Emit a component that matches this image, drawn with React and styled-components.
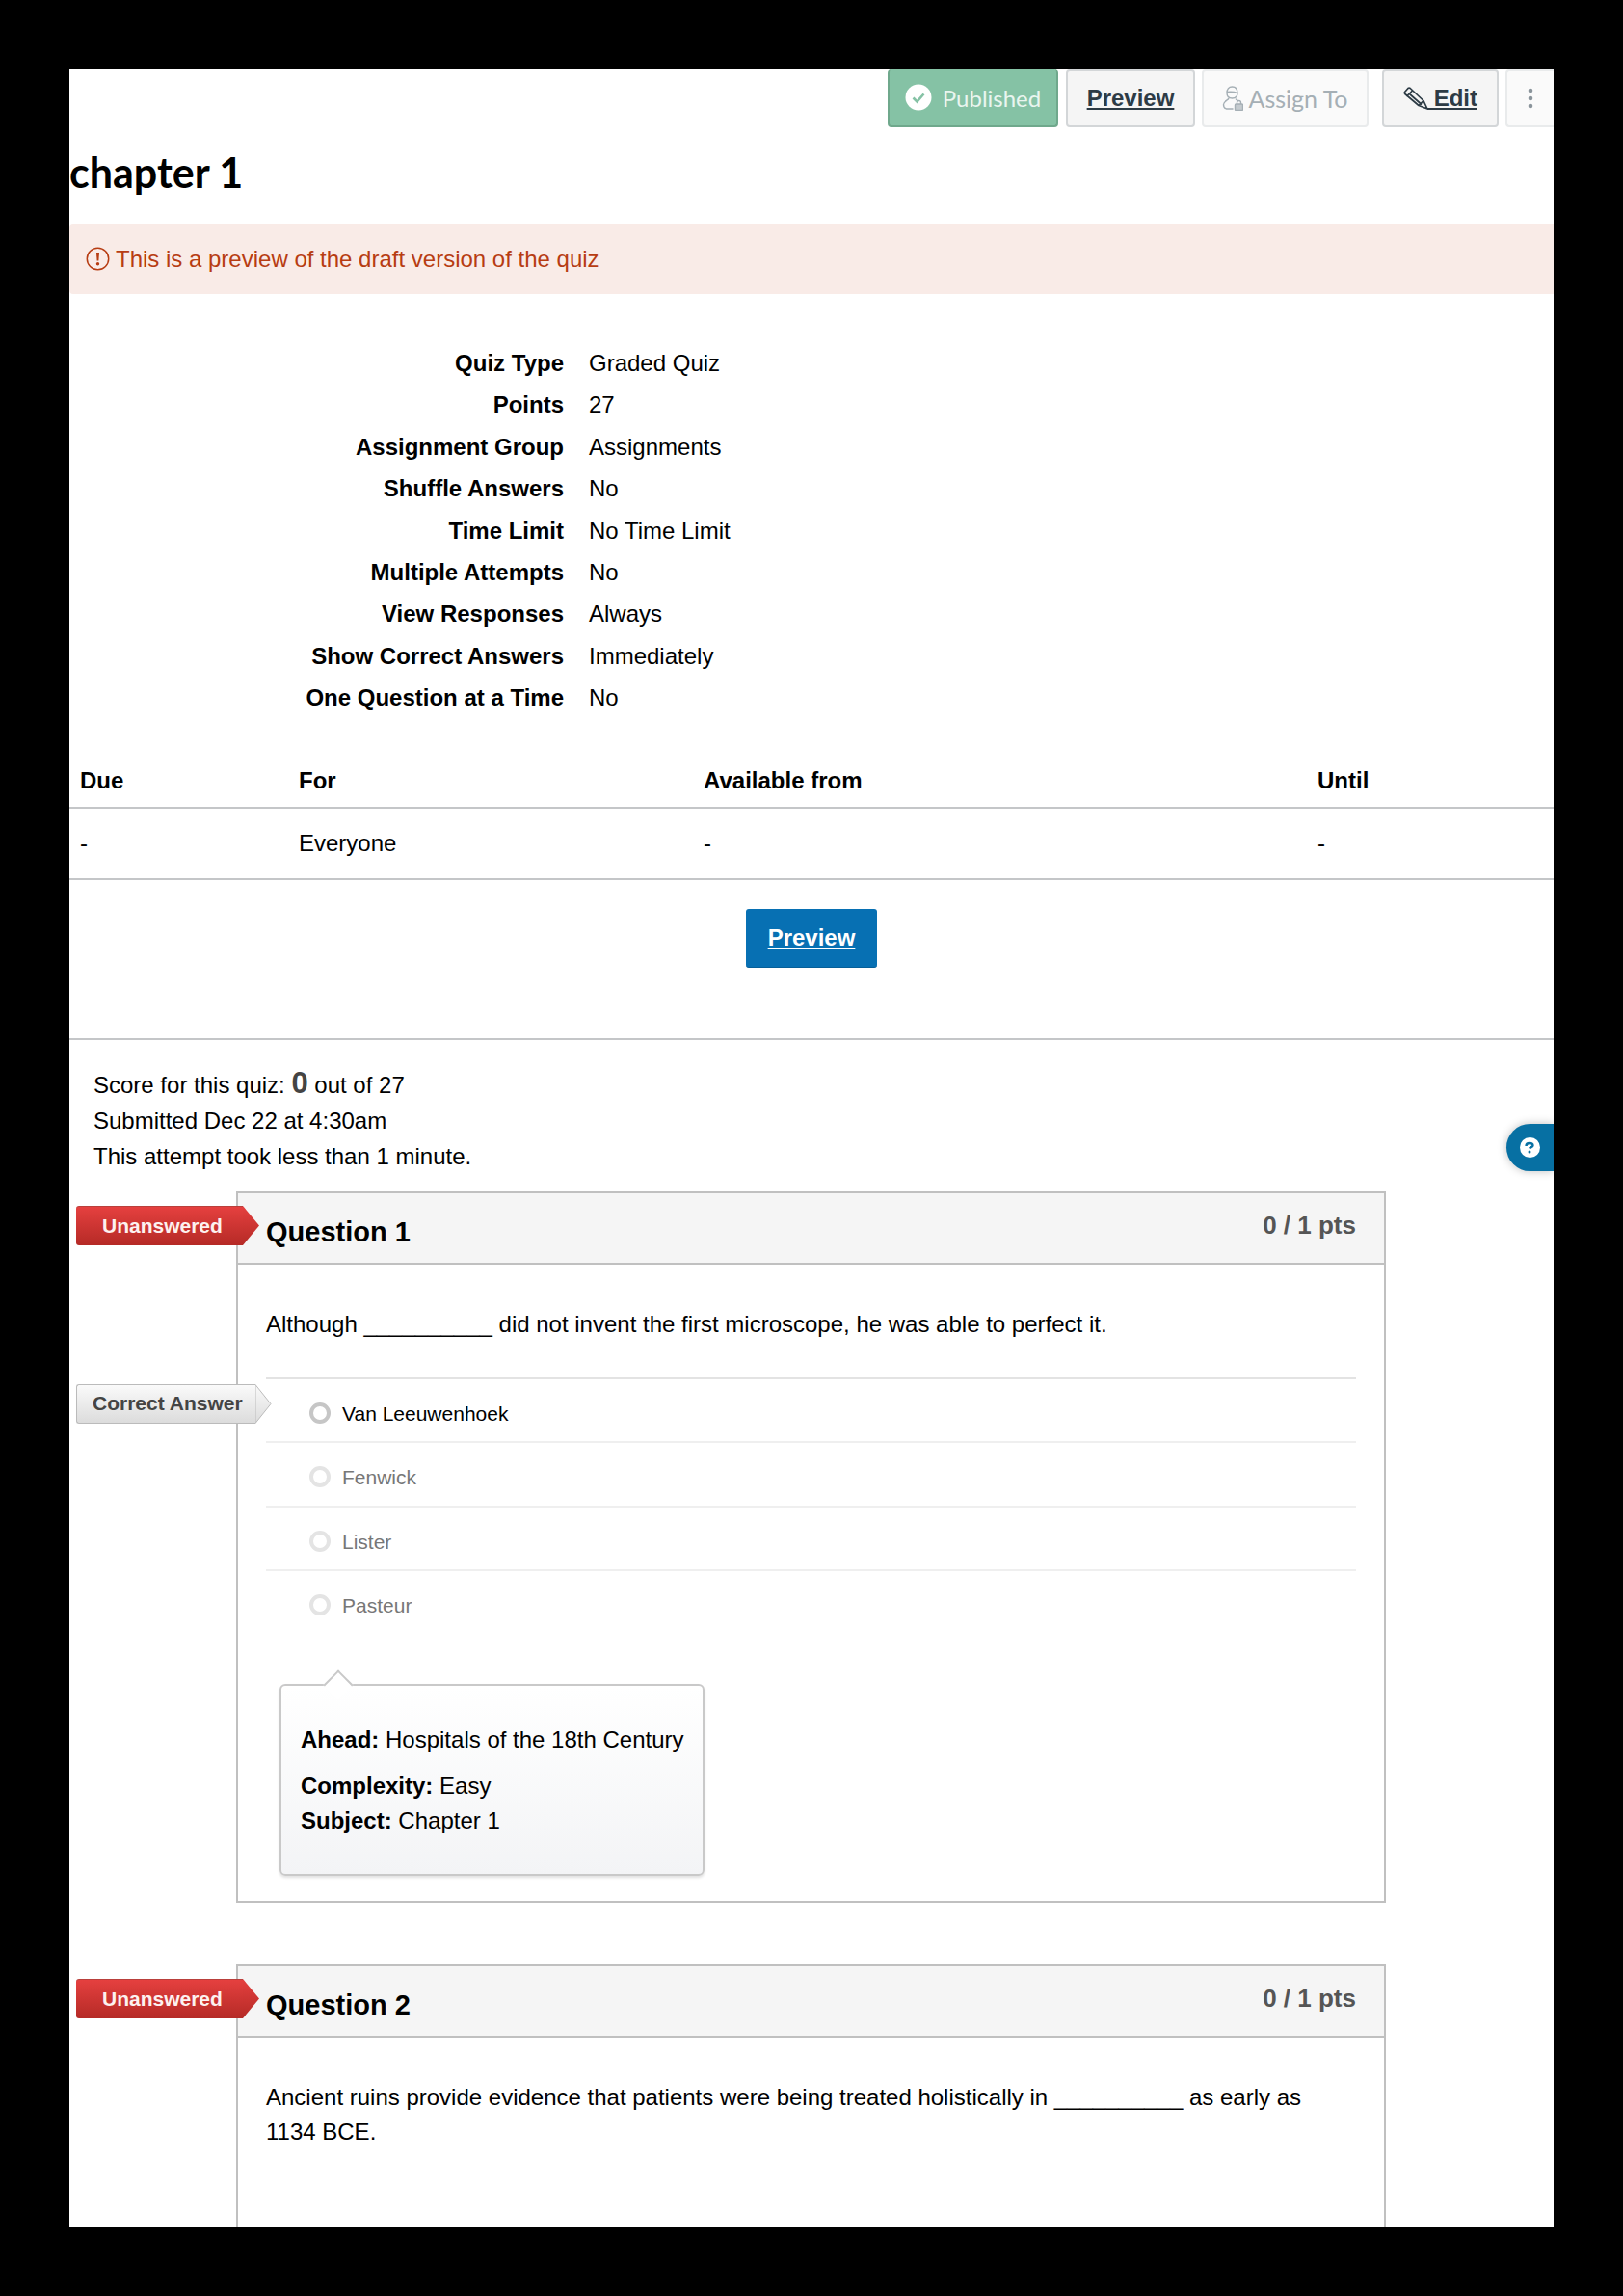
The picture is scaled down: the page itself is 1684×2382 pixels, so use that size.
import React from "react";
import styled, { createGlobalStyle } from "styled-components";

const GlobalStyle = createGlobalStyle`
  html, body {
    margin: 0;
    padding: 0;
    background: #000;
    overflow: hidden;
  }
  body {
    font-family: "Liberation Sans", Arial, sans-serif;
    font-size: 24px;
    color: #000;
  }
`;

const Sheet = styled.div`
  width: 1540px;
  height: 2238px;
  margin: 72px 0 0 72px;
  background: #fff;
  overflow: hidden;
  position: relative;
`;

/////////////////// header ///////////////////
const Toolbar = styled.div`
  display: flex;
  justify-content: flex-end;
  height: 60px;
`;

const ToolButton = styled.div`
  box-sizing: border-box;
  height: 60px;
  width: ${(p) => p.w}px;
  margin-left: ${(p) => p.gap || 7}px;
  display: flex;
  align-items: center;
  justify-content: center;
  background: #f5f5f5;
  border: 2px solid #d3d6d8;
  border-radius: 4px;
  color: #2d3b45;
  font-weight: bold;
  text-decoration: underline;
`;

const PublishedButton = styled(ToolButton)`
  background: #85c2a5;
  border-color: #6fa88c;
  color: #e9f5ef;
  font-family: Lato, sans-serif;
  font-weight: normal;
  text-decoration: none;
  gap: 11px;
  border-top: 0;
`;

const AssignButton = styled(ToolButton)`
  background: #fafafa;
  border-color: #e9ebec;
  color: #a5afb5;
  font-family: Lato, sans-serif;
  font-size: 25px;
  font-weight: normal;
  text-decoration: none;
  gap: 5px;
`;

const EditLabel = styled.span`
  white-space: pre;
  margin-left: -1px;
`;

const MoreButton = styled(ToolButton)`
  border-right: 0;
  border-radius: 4px 0 0 4px;
  background: #fafafa;
  border-color: #e9ebec;
`;

const Title = styled.h1`
  margin: 0;
  height: 100px;
  font-family: Lato, sans-serif;
  font-size: 43px;
  font-weight: bold;
  line-height: 94px;
`;

const Alert = styled.div`
  box-sizing: border-box;
  height: 73px;
  display: flex;
  align-items: center;
  gap: 6px;
  padding-left: 17px;
  background: #f9ebe7;
  border-radius: 4px 0 0 4px;
  color: #b73c12;
`;

/////////////////// quiz facts ///////////////////
const Facts = styled.div`
  padding-top: 50px;
`;

const FactRow = styled.div`
  display: grid;
  grid-template-columns: 513px 1fr;
  column-gap: 26px;
  height: 43.4px;
  line-height: 43.4px;
`;

const FactLabel = styled.div`
  font-weight: bold;
  text-align: right;
`;

const DueGrid = styled.div`
  display: grid;
  grid-template-columns: 227px 420px 637px 1fr;
  margin-top: ${(p) => p.top || 0}px;
  padding-left: 11px;
  height: ${(p) => p.h}px;
  align-items: center;
  border-bottom: 2px solid #c4c6c8;
  font-weight: ${(p) => (p.head ? "bold" : "normal")};
  box-sizing: border-box;
`;

const PreviewWrap = styled.div`
  display: flex;
  justify-content: center;
  height: 166px;
  box-sizing: border-box;
  padding-top: 30px;
  border-bottom: 2px solid #c4c6c8;
`;

const PreviewButton = styled.div`
  width: 136px;
  height: 61px;
  display: flex;
  align-items: center;
  justify-content: center;
  background: #0770b3;
  border-bottom: 1px solid #065f98;
  box-sizing: border-box;
  border-radius: 3px;
  color: #fff;
  font-weight: bold;
  text-decoration: underline;
`;

const Score = styled.div`
  padding: 26px 0 0 25px;
  line-height: 37px;
  height: 157px;
  box-sizing: border-box;
`;

const ScoreValue = styled.span`
  font-size: 31px;
  font-weight: bold;
  color: #444;
`;

/////////////////// questions ///////////////////
const Question = styled.section`
  position: relative;
  box-sizing: border-box;
  width: 1193px;
  margin-left: 173px;
  border: 2px solid #c0c0c0;
  margin-bottom: 64px;
`;

const QuestionHead = styled.div`
  height: 74px;
  box-sizing: border-box;
  background: #f5f5f5;
  border-bottom: 2px solid #c0c0c0;
  display: flex;
  justify-content: space-between;
  padding: 0 29px;
`;

const QuestionName = styled.div`
  font-size: 29px;
  font-weight: bold;
  line-height: 80px;
`;

const Points = styled.div`
  font-weight: bold;
  font-size: 26px;
  color: #555;
  line-height: 66px;
`;

const QuestionBody = styled.div`
  padding: 44px 29px 26px;
  line-height: 36px;
  min-height: ${(p) => p.minH || 0}px;
`;

const Answers = styled.div`
  margin-top: 37px;
`;

const Answer = styled.div`
  box-sizing: border-box;
  height: 66.5px;
  display: flex;
  align-items: center;
  gap: 12px;
  padding: 8px 0 0 45px;
  border-top: 2px solid ${(p) => (p.first ? "#e3e3e3" : "#efefef")};
  font-size: 21px;
  color: ${(p) => (p.dim ? "#777" : "#000")};
`;

const Radio = styled.span`
  width: 22px;
  height: 22px;
  box-sizing: border-box;
  border-radius: 50%;
  border: 4px solid ${(p) => (p.dim ? "#e4e4e4" : "#c6c6c6")};
  margin-top: -2px;
`;

const Tag = styled.div`
  position: absolute;
  left: -168px;
  top: ${(p) => p.top}px;
  height: 41px;
  display: flex;
  align-items: center;
  font-size: 21px;
  font-weight: bold;
`;

const TagBody = styled.div`
  height: 41px;
  box-sizing: border-box;
  display: flex;
  align-items: center;
  border-radius: 3px 0 0 3px;
  ${(p) =>
    p.red
      ? `
    width: 173px;
    padding-left: 27px;
    color: #fdf1f0;
    background: linear-gradient(#e5403f, #b52a26);
    border-top: 1px solid #b9403c;
  `
      : `
    width: 186px;
    padding-left: 16px;
    color: #444;
    background: linear-gradient(#fafafa, #dcdcdc);
    border: 1px solid #bbb;
    border-right: 0;
  `}
`;

const Popover = styled.div`
  position: relative;
  box-sizing: border-box;
  width: 441px;
  height: 199px;
  margin: 52px 0 0 14px;
  padding: 38px 0 0 20px;
  background: linear-gradient(#fff, #f3f4f6);
  border: 2px solid #c9c9c9;
  border-radius: 6px;
  box-shadow: 0 2px 3px rgba(0, 0, 0, 0.12);
  line-height: 36px;
`;

const PopoverArrow = styled.span`
  position: absolute;
  left: 48px;
  top: -12px;
  width: 20px;
  height: 20px;
  background: #fff;
  border-top: 2px solid #c9c9c9;
  border-left: 2px solid #c9c9c9;
  transform: rotate(45deg);
`;

const PopoverLine = styled.div`
  margin-bottom: ${(p) => p.gap || 0}px;
  white-space: nowrap;
`;

const HelpTab = styled.div`
  position: absolute;
  right: 0;
  top: 1094px;
  width: 49px;
  height: 49px;
  border-radius: 25px 0 0 25px;
  background: #0770a3;
  box-shadow: 0 0 10px rgba(0, 0, 0, 0.25);
  display: flex;
  align-items: center;
  padding-left: 14px;
  box-sizing: border-box;
`;

const CheckIcon = () => (
  <svg width="28" height="28" viewBox="0 0 28 28">
    <circle cx="14" cy="14" r="13.5" fill="#fff" />
    <path d="M8.5 14.5l4 4 7-8" fill="none" stroke="#85c2a5" strokeWidth="2.6" />
  </svg>
);

const AssignIcon = () => (
  <svg width="22" height="26" viewBox="0 0 22 26" fill="none" stroke="#a5afb5" strokeWidth="1.4">
    <path d="M5 7.500C5 3.500 7 1 10.500 1S16 3.500 16 7.500 14 13 10.500 13 5 11 5 7.500z" />
    <path d="M5 6.500c3-.5 7-.5 11 1" />
    <path d="M7 13c-.5 2-5.500 3-5.500 6.500 0 2.500 1 4 3 4.500h7" />
    <path d="M14 13.500c.5 1 1.500 1.500 2.500 2" />
    <rect x="13.500" y="19" width="8" height="6.500" rx="1" fill="#c5cbcf" />
    <path d="M15.500 19v-1.500a2 2 0 0 1 4 0V19" />
  </svg>
);

const PencilIcon = () => (
  <svg width="26" height="24" viewBox="0 0 26 24" fill="none" stroke="#2d3b45" strokeWidth="1.7" strokeLinejoin="round">
    <path d="M1.500 5.500L5 1.500c.8-.6 1.500-.5 2.200 0L21 14.500 25 23l-9-3.500L1.800 7.500c-.6-.6-.7-1.300-.3-2z" />
    <path d="M3.500 10l6-6" />
    <path d="M6.500 7.500l12.500 11" />
    <path d="M16 19.500l5-5" />
  </svg>
);

const DotsIcon = () => (
  <svg width="6" height="24" viewBox="0 0 6 24" fill="#8a949b">
    <circle cx="3" cy="4" r="2.300" />
    <circle cx="3" cy="12" r="2.300" />
    <circle cx="3" cy="20" r="2.300" />
  </svg>
);

const WarnIcon = () => (
  <svg width="25" height="25" viewBox="0 0 25 25">
    <circle cx="12.5" cy="12.5" r="11.2" fill="none" stroke="#b73c12" strokeWidth="1.5" />
    <path d="M11 6h3l-.6 8.500h-1.800z" fill="#b73c12" />
    <circle cx="12.5" cy="17.800" r="1.700" fill="#b73c12" />
  </svg>
);

const HelpIcon = () => (
  <svg width="21" height="21" viewBox="0 0 21 21">
    <circle cx="10.5" cy="10.500" r="10.500" fill="#fff" />
    <path d="M6.500 9c0-2 1.500-3 3.500-3s3.500 1 3.500 2.500-3 1.500-3.500 3" fill="none" stroke="#0770a3" strokeWidth="2.400" />
    <circle cx="10" cy="15" r="1.500" fill="#0770a3" />
  </svg>
);

const TagTip = ({ red }) => {
  const id = red ? "tipRed" : "tipGrey";
  return (
    <svg width="17" height="41" viewBox="0 0 17 41">
      <defs>
        <linearGradient id={id} x1="0" y1="0" x2="0" y2="1">
          <stop offset="0" stopColor={red ? "#e5403f" : "#fafafa"} />
          <stop offset="1" stopColor={red ? "#b52a26" : "#dcdcdc"} />
        </linearGradient>
      </defs>
      {red ? (
        <path d="M0 0l17 20.500L0 41z" fill={`url(#${id})`} />
      ) : (
        <path d="M0 .5L16 20.500 0 40.500z" fill={`url(#${id})`} stroke="#bbb" />
      )}
    </svg>
  );
};

const facts = [
  ["Quiz Type", "Graded Quiz"],
  ["Points", "27"],
  ["Assignment Group", "Assignments"],
  ["Shuffle Answers", "No"],
  ["Time Limit", "No Time Limit"],
  ["Multiple Attempts", "No"],
  ["View Responses", "Always"],
  ["Show Correct Answers", "Immediately"],
  ["One Question at a Time", "No"],
];

const answers = ["Van Leeuwenhoek", "Fenwick", "Lister", "Pasteur"];

const App = () => {
  return (
    <>
      <GlobalStyle />
      <Sheet>
        <Toolbar>
          <PublishedButton w={177}>
            <CheckIcon />
            Published
          </PublishedButton>
          <ToolButton w={134} gap={8}>
            Preview
          </ToolButton>
          <AssignButton w={173}>
            <AssignIcon />
            Assign To
          </AssignButton>
          <ToolButton w={121} gap={14}>
            <PencilIcon />
            <EditLabel> Edit</EditLabel>
          </ToolButton>
          <MoreButton w={50}>
            <DotsIcon />
          </MoreButton>
        </Toolbar>
        <Title>chapter 1</Title>
        <Alert>
          <WarnIcon />
          This is a preview of the draft version of the quiz
        </Alert>

        <Facts>
          {facts.map(([label, value]) => (
            <FactRow key={label}>
              <FactLabel>{label}</FactLabel>
              <div>{value}</div>
            </FactRow>
          ))}
        </Facts>

        <DueGrid head h={55} top={38}>
          <div>Due</div>
          <div>For</div>
          <div>Available from</div>
          <div>Until</div>
        </DueGrid>
        <DueGrid h={74}>
          <div>-</div>
          <div>Everyone</div>
          <div>-</div>
          <div>-</div>
        </DueGrid>
        <PreviewWrap>
          <PreviewButton>Preview</PreviewButton>
        </PreviewWrap>

        <Score>
          Score for this quiz: <ScoreValue>0</ScoreValue> out of 27
          <br />
          Submitted Dec 22 at 4:30am
          <br />
          This attempt took less than 1 minute.
        </Score>

        <Question>
          <Tag top={13}>
            <TagBody red>Unanswered</TagBody>
            <TagTip red />
          </Tag>
          <QuestionHead>
            <QuestionName>Question 1</QuestionName>
            <Points>0 / 1 pts</Points>
          </QuestionHead>
          <QuestionBody>
            Although __________ did not invent the first microscope, he was able to perfect it.
            <Answers>
              {answers.map((name, i) => (
                <Answer key={name} first={i === 0} dim={i > 0}>
                  <Radio dim={i > 0} />
                  {name}
                </Answer>
              ))}
            </Answers>
            <Popover>
              <PopoverArrow />
              <PopoverLine gap={12}>
                <b>Ahead:</b> Hospitals of the 18th Century
              </PopoverLine>
              <PopoverLine>
                <b>Complexity:</b> Easy
              </PopoverLine>
              <PopoverLine>
                <b>Subject:</b> Chapter 1
              </PopoverLine>
            </Popover>
          </QuestionBody>
          <Tag top={198}>
            <TagBody>Correct Answer</TagBody>
            <TagTip />
          </Tag>
        </Question>

        <Question>
          <Tag top={13}>
            <TagBody red>Unanswered</TagBody>
            <TagTip red />
          </Tag>
          <QuestionHead>
            <QuestionName>Question 2</QuestionName>
            <Points>0 / 1 pts</Points>
          </QuestionHead>
          <QuestionBody minH={400}>
            Ancient ruins provide evidence that patients were being treated holistically in __________ as early as 1134
            BCE.
          </QuestionBody>
        </Question>

        <HelpTab>
          <HelpIcon />
        </HelpTab>
      </Sheet>
    </>
  );
};

export default App;
